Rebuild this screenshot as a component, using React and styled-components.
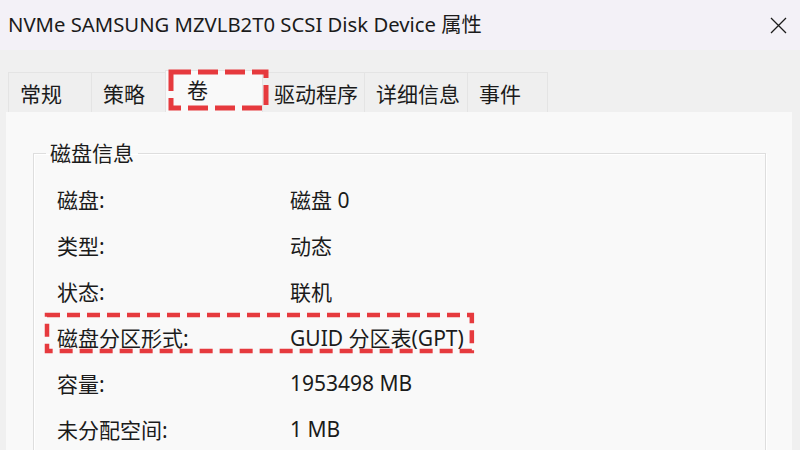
import React from 'react'
import styled, { createGlobalStyle } from 'styled-components'

const GlobalStyle = createGlobalStyle`
  html, body {
    margin: 0;
    padding: 0;
    width: 800px;
    height: 450px;
    overflow: hidden;
    background: #f0f0f0;
  }
  body {
    font-family: "Noto Sans", "Noto Sans CJK SC", sans-serif;
    color: #1b1b1b;
  }
`

const tabs = [
  { label: '常规', width: 84 },
  { label: '策略', width: 75 },
  { label: '卷', width: 98, active: true, marked: true },
  { label: '驱动程序', width: 103 },
  { label: '详细信息', width: 104 },
  { label: '事件', width: 81 },
]

const rows = [
  { label: '磁盘:', value: '磁盘 0' },
  { label: '类型:', value: '动态' },
  { label: '状态:', value: '联机' },
  { label: '磁盘分区形式:', value: 'GUID 分区表(GPT)', marked: true },
  { label: '容量:', value: '1953498 MB' },
  { label: '未分配空间:', value: '1 MB' },
]

const DashMark = ({ inset, dash, thick }) => (
  <MarkFrame inset={inset} dash={dash} thick={thick}>
    <svg width="100%" height="100%">
      <rect x="0" y="0" width="100%" height="100%" />
    </svg>
  </MarkFrame>
)

export default function App() {
  return (
    <>
      <GlobalStyle />
      <Window>
        <TitleBar>
          <Title>NVMe SAMSUNG MZVLB2T0 SCSI Disk Device 属性</Title>
          <CloseButton aria-label="关闭">
            <svg width="17" height="17" viewBox="0 0 17 17">
              <path d="M1 1 L16 16 M16 1 L1 16" stroke="#1b1b1b" strokeWidth="1.3" fill="none" />
            </svg>
          </CloseButton>
        </TitleBar>
        <Body>
          <TabStrip>
            {tabs.map((t) => (
              <Tab key={t.label} width={t.width} active={t.active}>
                {t.label}
                {t.marked ? <DashMark inset="0.5px -3.5px 4.5px 4.5px" dash="20 7" thick={5} /> : null}
              </Tab>
            ))}
          </TabStrip>
          <Panel>
            <Group>
              <Legend>磁盘信息</Legend>
              {rows.map((r) => (
                <Row key={r.label} marked={r.marked}>
                  <Label>{r.label}</Label>
                  <Value>{r.value}</Value>
                  {r.marked ? <DashMark inset="1px -8px 9px 1px" dash="13 7" thick={4.5} /> : null}
                </Row>
              ))}
            </Group>
          </Panel>
        </Body>
      </Window>
    </>
  )
}

const Window = styled.div`
  width: 800px;
  height: 450px;
  display: flex;
  flex-direction: column;
  overflow: hidden;
`

const TitleBar = styled.div`
  height: 50px;
  flex-shrink: 0;
  background: #f3f1f7;
  display: flex;
  align-items: center;
  justify-content: space-between;
  padding-left: 8px;
`

const Title = styled.div`
  font-size: 20.3px;
  line-height: 1;
  margin-top: -2px;
`

const CloseButton = styled.button`
  width: 44px;
  height: 50px;
  border: none;
  background: transparent;
  padding: 0;
  display: flex;
  align-items: center;
  justify-content: center;
`

const Body = styled.div`
  flex: 1;
  background: #f0f0f0;
  padding: 22px 8px 0 6px;
  display: flex;
  flex-direction: column;
`

const TabStrip = styled.div`
  display: flex;
  height: 40px;
  padding-left: 2px;
  align-items: flex-end;
`

const Tab = styled.div`
  position: relative;
  z-index: ${(p) => (p.active ? 2 : 1)};
  box-sizing: border-box;
  width: ${(p) => p.width}px;
  height: ${(p) => (p.active ? 42 : 40)}px;
  padding-left: ${(p) => (p.active ? 21 : 11)}px;
  padding-bottom: ${(p) => (p.active ? 5 : 0)}px;
  display: flex;
  align-items: center;
  font-size: 21px;
  background: ${(p) => (p.active ? '#f9f9f9' : '#efefef')};
  border: 1px solid #e4e4e4;
  border-bottom: none;
  margin-right: -1px;
`

const MarkFrame = styled.div`
  position: absolute;
  z-index: 5;
  inset: ${(p) => p.inset};
  pointer-events: none;
  svg {
    display: block;
    overflow: visible;
  }
  rect {
    fill: none;
    stroke: #e63a3e;
    stroke-width: ${(p) => p.thick};
    stroke-dasharray: ${(p) => p.dash};
  }
`

const Panel = styled.div`
  flex: 1;
  background: #f9f9f9;
  padding: 27px 26px 0 27px;
`

const Group = styled.fieldset`
  margin: 0;
  padding: 9px 0 0 12px;
  border: 1px solid #dedede;
  box-shadow: inset 1px 1px 0 #ffffff, 1px 1px 0 #ffffff;
  min-height: 400px;
`

const Legend = styled.legend`
  padding: 0 4px;
  font-size: 21px;
  line-height: 28px;
`

const Row = styled.div`
  position: relative;
  display: grid;
  grid-template-columns: 233px auto;
  align-items: center;
  height: 46px;
  padding-left: 11px;
  font-size: 21px;
  width: ${(p) => (p.marked ? 'fit-content' : 'auto')};
`

const Label = styled.div``

const Value = styled.div`
  white-space: nowrap;
`
